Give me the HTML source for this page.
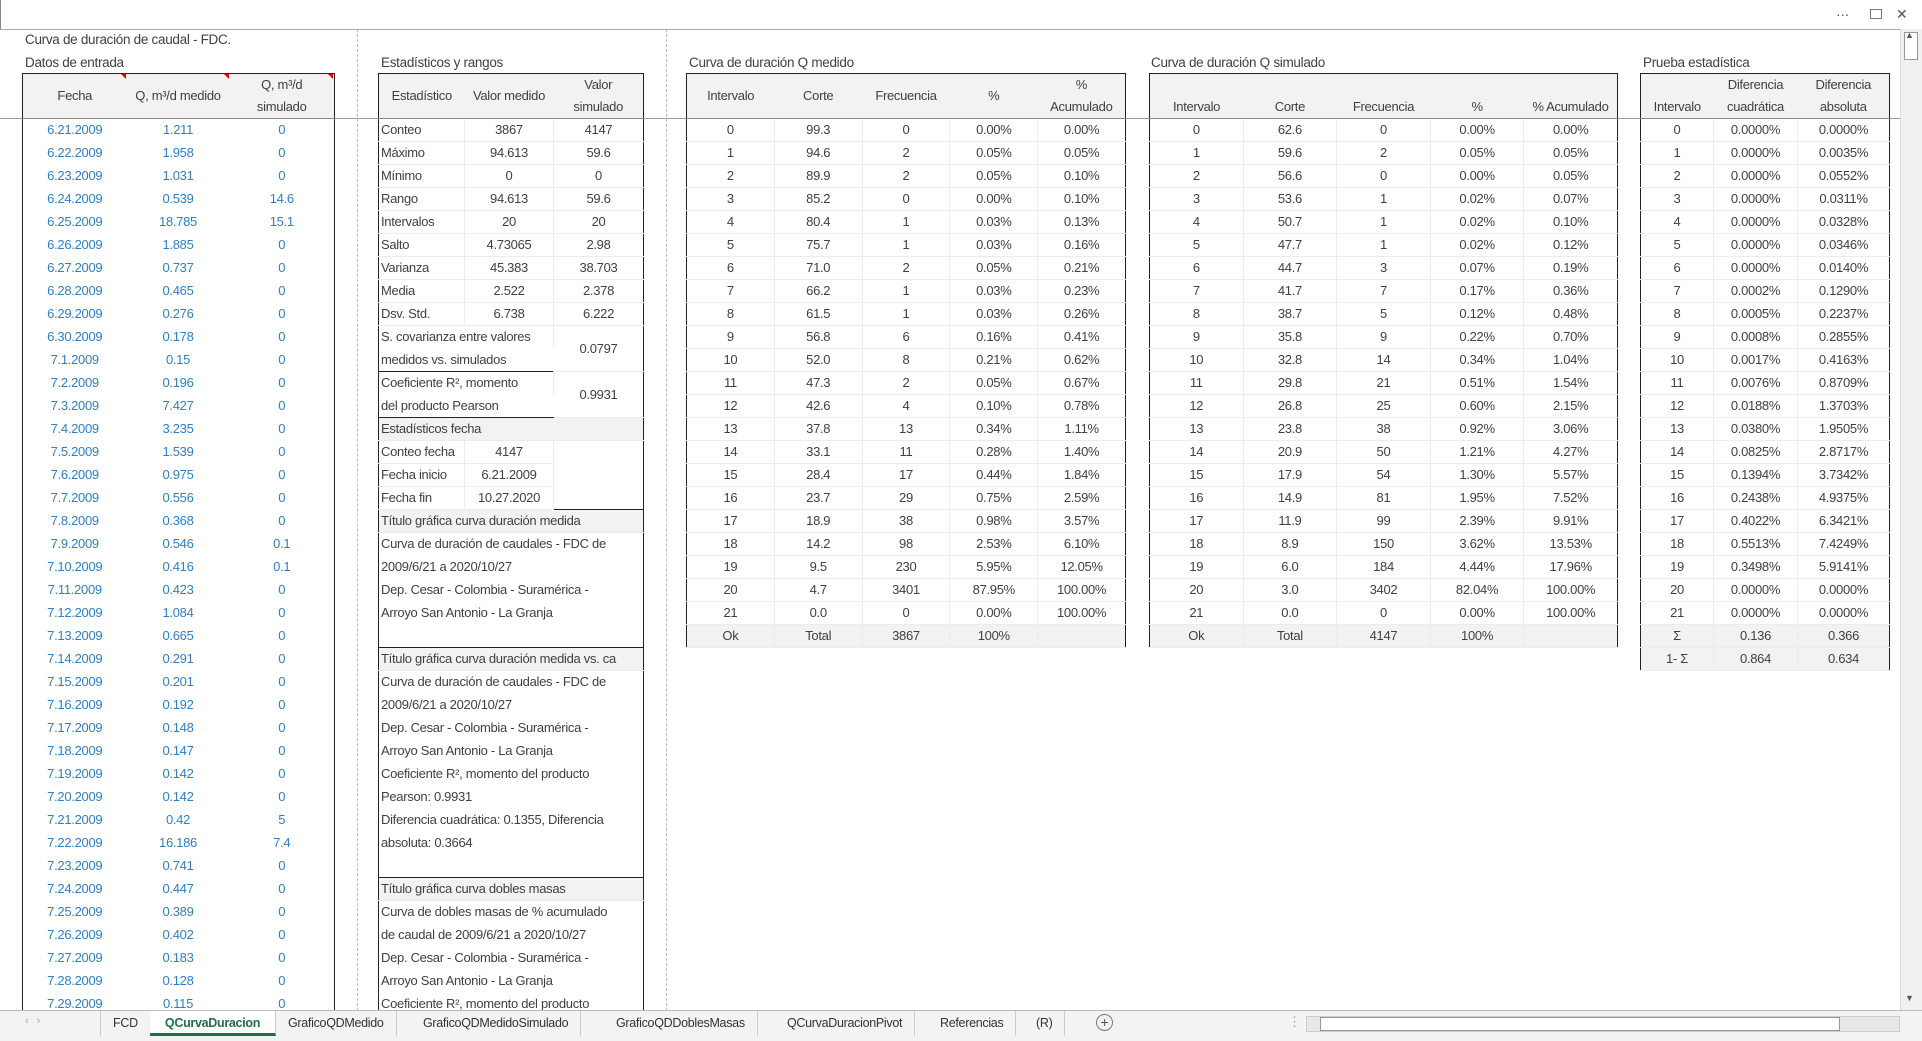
<!DOCTYPE html>
<html><head><meta charset="utf-8"><style>
*{margin:0;padding:0;box-sizing:border-box}
body{width:1922px;height:1041px;overflow:hidden;background:#fff;font-family:"Liberation Sans",sans-serif;font-size:13px;color:#404040;position:relative;letter-spacing:-0.3px}
.a{position:absolute;white-space:nowrap}
table{position:absolute;border-collapse:collapse;table-layout:fixed;border:1.5px solid #222}
td{height:23px;text-align:center;border-right:1px solid #ececec;border-bottom:1px solid #ececec;white-space:nowrap;overflow:hidden;padding:0 2px;line-height:22px}
td:last-child{border-right:none}
th{height:45px;background:#f2f2f2;font-weight:normal;border-bottom:1px solid #888;line-height:22px;vertical-align:middle}
th.b{vertical-align:bottom}
.blue td{color:#2f7fc4;border:none}
.l{text-align:left}
.g td{background:#f2f2f2}
.bt td{border-top:1.5px solid #222}
.dot{position:absolute;top:29px;height:982px;border-left:1px dashed #bbb}
.tab{position:absolute;top:1011px;height:25px;line-height:24px;font-size:12.5px;color:#333;padding:0 12px;border-right:1px solid #ccc}
</style></head><body>
<div class="a" style="left:0;top:29px;width:1900px;border-top:1px solid #aaa"></div>
<div class="a" style="left:0;top:0;height:29px;border-left:1px solid #888"></div>
<div class="a" style="left:1836px;top:6px;font-size:14px;color:#555">···</div>
<div class="a" style="left:1870px;top:9px;width:12px;height:10px;border:1px solid #777"></div>
<div class="a" style="left:1896px;top:6px;font-size:14px;color:#555">✕</div>
<div class="a" style="left:0;top:118px;width:1900px;border-top:1px solid #999"></div>
<div class="dot" style="left:357px"></div>
<div class="dot" style="left:666px"></div>
<div class="a" style="left:25px;top:32px;font-size:13.5px">Curva de duración de caudal - FDC.</div>
<div class="a" style="left:25px;top:55px;font-size:13.5px">Datos de entrada</div>
<div class="a" style="left:381px;top:55px;font-size:13.5px">Estadísticos y rangos</div>
<div class="a" style="left:689px;top:55px;font-size:13.5px">Curva de duración Q medido</div>
<div class="a" style="left:1151px;top:55px;font-size:13.5px">Curva de duración Q simulado</div>
<div class="a" style="left:1643px;top:55px;font-size:13.5px">Prueba estadística</div>

<table style="left:22px;top:73px;width:312px">
<colgroup><col style="width:104px"><col style="width:103px"><col style="width:105px"></colgroup>
<tr><th>Fecha</th><th>Q, m³/d medido</th><th>Q, m³/d<br>simulado</th></tr>
<tbody class="blue">
<tr><td>6.21.2009</td><td>1.211</td><td>0</td></tr>
<tr><td>6.22.2009</td><td>1.958</td><td>0</td></tr>
<tr><td>6.23.2009</td><td>1.031</td><td>0</td></tr>
<tr><td>6.24.2009</td><td>0.539</td><td>14.6</td></tr>
<tr><td>6.25.2009</td><td>18.785</td><td>15.1</td></tr>
<tr><td>6.26.2009</td><td>1.885</td><td>0</td></tr>
<tr><td>6.27.2009</td><td>0.737</td><td>0</td></tr>
<tr><td>6.28.2009</td><td>0.465</td><td>0</td></tr>
<tr><td>6.29.2009</td><td>0.276</td><td>0</td></tr>
<tr><td>6.30.2009</td><td>0.178</td><td>0</td></tr>
<tr><td>7.1.2009</td><td>0.15</td><td>0</td></tr>
<tr><td>7.2.2009</td><td>0.196</td><td>0</td></tr>
<tr><td>7.3.2009</td><td>7.427</td><td>0</td></tr>
<tr><td>7.4.2009</td><td>3.235</td><td>0</td></tr>
<tr><td>7.5.2009</td><td>1.539</td><td>0</td></tr>
<tr><td>7.6.2009</td><td>0.975</td><td>0</td></tr>
<tr><td>7.7.2009</td><td>0.556</td><td>0</td></tr>
<tr><td>7.8.2009</td><td>0.368</td><td>0</td></tr>
<tr><td>7.9.2009</td><td>0.546</td><td>0.1</td></tr>
<tr><td>7.10.2009</td><td>0.416</td><td>0.1</td></tr>
<tr><td>7.11.2009</td><td>0.423</td><td>0</td></tr>
<tr><td>7.12.2009</td><td>1.084</td><td>0</td></tr>
<tr><td>7.13.2009</td><td>0.665</td><td>0</td></tr>
<tr><td>7.14.2009</td><td>0.291</td><td>0</td></tr>
<tr><td>7.15.2009</td><td>0.201</td><td>0</td></tr>
<tr><td>7.16.2009</td><td>0.192</td><td>0</td></tr>
<tr><td>7.17.2009</td><td>0.148</td><td>0</td></tr>
<tr><td>7.18.2009</td><td>0.147</td><td>0</td></tr>
<tr><td>7.19.2009</td><td>0.142</td><td>0</td></tr>
<tr><td>7.20.2009</td><td>0.142</td><td>0</td></tr>
<tr><td>7.21.2009</td><td>0.42</td><td>5</td></tr>
<tr><td>7.22.2009</td><td>16.186</td><td>7.4</td></tr>
<tr><td>7.23.2009</td><td>0.741</td><td>0</td></tr>
<tr><td>7.24.2009</td><td>0.447</td><td>0</td></tr>
<tr><td>7.25.2009</td><td>0.389</td><td>0</td></tr>
<tr><td>7.26.2009</td><td>0.402</td><td>0</td></tr>
<tr><td>7.27.2009</td><td>0.183</td><td>0</td></tr>
<tr><td>7.28.2009</td><td>0.128</td><td>0</td></tr>
<tr><td>7.29.2009</td><td>0.115</td><td>0</td></tr>
</tbody></table>
<div class="a" style="left:121px;top:74px;border-top:5px solid #e00;border-left:5px solid transparent"></div>
<div class="a" style="left:224px;top:74px;border-top:5px solid #e00;border-left:5px solid transparent"></div>
<div class="a" style="left:328px;top:74px;border-top:5px solid #e00;border-left:5px solid transparent"></div>

<table style="left:378px;top:73px;width:265px">
<colgroup><col style="width:86px"><col style="width:89px"><col style="width:90px"></colgroup>
<tr><th>Estadístico</th><th>Valor medido</th><th>Valor<br>simulado</th></tr>
<tr><td class="l">Conteo</td><td>3867</td><td>4147</td></tr>
<tr><td class="l">Máximo</td><td>94.613</td><td>59.6</td></tr>
<tr><td class="l">Mínimo</td><td>0</td><td>0</td></tr>
<tr><td class="l">Rango</td><td>94.613</td><td>59.6</td></tr>
<tr><td class="l">Intervalos</td><td>20</td><td>20</td></tr>
<tr><td class="l">Salto</td><td>4.73065</td><td>2.98</td></tr>
<tr><td class="l">Varianza</td><td>45.383</td><td>38.703</td></tr>
<tr><td class="l">Media</td><td>2.522</td><td>2.378</td></tr>
<tr><td class="l">Dsv. Std.</td><td>6.738</td><td>6.222</td></tr>
<tr class="bt"><td class="l" colspan="2" style="border-right:1px solid #ececec;border-bottom:none;border-top:1.5px solid #222">S. covarianza entre valores</td><td rowspan="2" style="border-top:1.5px solid #222">0.0797</td></tr>
<tr><td class="l" colspan="2" style="border-bottom:none">medidos vs. simulados</td></tr>
<tr class="bt"><td class="l" colspan="2" style="border-right:1px solid #ececec;border-bottom:none;border-top:1.5px solid #222">Coeficiente R², momento</td><td rowspan="2" style="border-top:1.5px solid #222">0.9931</td></tr>
<tr><td class="l" colspan="2" style="border-bottom:none">del producto Pearson</td></tr>
<tr class="bt g"><td class="l" colspan="3">Estadísticos fecha</td></tr>
<tr><td class="l">Conteo fecha</td><td>4147</td><td style="border:none"></td></tr>
<tr><td class="l">Fecha inicio</td><td>6.21.2009</td><td style="border:none"></td></tr>
<tr><td class="l">Fecha fin</td><td>10.27.2020</td><td style="border:none"></td></tr>
<tr class="bt g"><td class="l" colspan="3">Título gráfica curva duración medida</td></tr>
<tr><td class="l" colspan="3" style="border:none">Curva de duración de caudales - FDC de</td></tr>
<tr><td class="l" colspan="3" style="border:none">2009/6/21 a 2020/10/27</td></tr>
<tr><td class="l" colspan="3" style="border:none">Dep. Cesar - Colombia - Suramérica -</td></tr>
<tr><td class="l" colspan="3" style="border:none">Arroyo San Antonio - La Granja</td></tr>
<tr><td colspan="3" style="border:none"></td></tr>
<tr class="bt g"><td class="l" colspan="3">Título gráfica curva duración medida vs. ca</td></tr>
<tr><td class="l" colspan="3" style="border:none">Curva de duración de caudales - FDC de</td></tr>
<tr><td class="l" colspan="3" style="border:none">2009/6/21 a 2020/10/27</td></tr>
<tr><td class="l" colspan="3" style="border:none">Dep. Cesar - Colombia - Suramérica -</td></tr>
<tr><td class="l" colspan="3" style="border:none">Arroyo San Antonio - La Granja</td></tr>
<tr><td class="l" colspan="3" style="border:none">Coeficiente R², momento del producto</td></tr>
<tr><td class="l" colspan="3" style="border:none">Pearson: 0.9931</td></tr>
<tr><td class="l" colspan="3" style="border:none">Diferencia cuadrática: 0.1355, Diferencia</td></tr>
<tr><td class="l" colspan="3" style="border:none">absoluta: 0.3664</td></tr>
<tr><td colspan="3" style="border:none"></td></tr>
<tr class="bt g"><td class="l" colspan="3">Título gráfica curva dobles masas</td></tr>
<tr><td class="l" colspan="3" style="border:none">Curva de dobles masas de % acumulado</td></tr>
<tr><td class="l" colspan="3" style="border:none">de caudal de 2009/6/21 a 2020/10/27</td></tr>
<tr><td class="l" colspan="3" style="border:none">Dep. Cesar - Colombia - Suramérica -</td></tr>
<tr><td class="l" colspan="3" style="border:none">Arroyo San Antonio - La Granja</td></tr>
<tr><td class="l" colspan="3" style="border:none">Coeficiente R², momento del producto</td></tr>
</table>

<table style="left:686px;top:73px;width:440px">
<tr><th>Intervalo</th><th>Corte</th><th>Frecuencia</th><th>%</th><th>%<br>Acumulado</th></tr>
<tr><td>0</td><td>99.3</td><td>0</td><td>0.00%</td><td>0.00%</td></tr>
<tr><td>1</td><td>94.6</td><td>2</td><td>0.05%</td><td>0.05%</td></tr>
<tr><td>2</td><td>89.9</td><td>2</td><td>0.05%</td><td>0.10%</td></tr>
<tr><td>3</td><td>85.2</td><td>0</td><td>0.00%</td><td>0.10%</td></tr>
<tr><td>4</td><td>80.4</td><td>1</td><td>0.03%</td><td>0.13%</td></tr>
<tr><td>5</td><td>75.7</td><td>1</td><td>0.03%</td><td>0.16%</td></tr>
<tr><td>6</td><td>71.0</td><td>2</td><td>0.05%</td><td>0.21%</td></tr>
<tr><td>7</td><td>66.2</td><td>1</td><td>0.03%</td><td>0.23%</td></tr>
<tr><td>8</td><td>61.5</td><td>1</td><td>0.03%</td><td>0.26%</td></tr>
<tr><td>9</td><td>56.8</td><td>6</td><td>0.16%</td><td>0.41%</td></tr>
<tr><td>10</td><td>52.0</td><td>8</td><td>0.21%</td><td>0.62%</td></tr>
<tr><td>11</td><td>47.3</td><td>2</td><td>0.05%</td><td>0.67%</td></tr>
<tr><td>12</td><td>42.6</td><td>4</td><td>0.10%</td><td>0.78%</td></tr>
<tr><td>13</td><td>37.8</td><td>13</td><td>0.34%</td><td>1.11%</td></tr>
<tr><td>14</td><td>33.1</td><td>11</td><td>0.28%</td><td>1.40%</td></tr>
<tr><td>15</td><td>28.4</td><td>17</td><td>0.44%</td><td>1.84%</td></tr>
<tr><td>16</td><td>23.7</td><td>29</td><td>0.75%</td><td>2.59%</td></tr>
<tr><td>17</td><td>18.9</td><td>38</td><td>0.98%</td><td>3.57%</td></tr>
<tr><td>18</td><td>14.2</td><td>98</td><td>2.53%</td><td>6.10%</td></tr>
<tr><td>19</td><td>9.5</td><td>230</td><td>5.95%</td><td>12.05%</td></tr>
<tr><td>20</td><td>4.7</td><td>3401</td><td>87.95%</td><td>100.00%</td></tr>
<tr><td>21</td><td>0.0</td><td>0</td><td>0.00%</td><td>100.00%</td></tr>
<tr class="g"><td>Ok</td><td>Total</td><td>3867</td><td>100%</td><td></td></tr>
</table>

<table style="left:1149px;top:73px;width:469px">
<tr><th class="b">Intervalo</th><th class="b">Corte</th><th class="b">Frecuencia</th><th class="b">%</th><th class="b">% Acumulado</th></tr>
<tr><td>0</td><td>62.6</td><td>0</td><td>0.00%</td><td>0.00%</td></tr>
<tr><td>1</td><td>59.6</td><td>2</td><td>0.05%</td><td>0.05%</td></tr>
<tr><td>2</td><td>56.6</td><td>0</td><td>0.00%</td><td>0.05%</td></tr>
<tr><td>3</td><td>53.6</td><td>1</td><td>0.02%</td><td>0.07%</td></tr>
<tr><td>4</td><td>50.7</td><td>1</td><td>0.02%</td><td>0.10%</td></tr>
<tr><td>5</td><td>47.7</td><td>1</td><td>0.02%</td><td>0.12%</td></tr>
<tr><td>6</td><td>44.7</td><td>3</td><td>0.07%</td><td>0.19%</td></tr>
<tr><td>7</td><td>41.7</td><td>7</td><td>0.17%</td><td>0.36%</td></tr>
<tr><td>8</td><td>38.7</td><td>5</td><td>0.12%</td><td>0.48%</td></tr>
<tr><td>9</td><td>35.8</td><td>9</td><td>0.22%</td><td>0.70%</td></tr>
<tr><td>10</td><td>32.8</td><td>14</td><td>0.34%</td><td>1.04%</td></tr>
<tr><td>11</td><td>29.8</td><td>21</td><td>0.51%</td><td>1.54%</td></tr>
<tr><td>12</td><td>26.8</td><td>25</td><td>0.60%</td><td>2.15%</td></tr>
<tr><td>13</td><td>23.8</td><td>38</td><td>0.92%</td><td>3.06%</td></tr>
<tr><td>14</td><td>20.9</td><td>50</td><td>1.21%</td><td>4.27%</td></tr>
<tr><td>15</td><td>17.9</td><td>54</td><td>1.30%</td><td>5.57%</td></tr>
<tr><td>16</td><td>14.9</td><td>81</td><td>1.95%</td><td>7.52%</td></tr>
<tr><td>17</td><td>11.9</td><td>99</td><td>2.39%</td><td>9.91%</td></tr>
<tr><td>18</td><td>8.9</td><td>150</td><td>3.62%</td><td>13.53%</td></tr>
<tr><td>19</td><td>6.0</td><td>184</td><td>4.44%</td><td>17.96%</td></tr>
<tr><td>20</td><td>3.0</td><td>3402</td><td>82.04%</td><td>100.00%</td></tr>
<tr><td>21</td><td>0.0</td><td>0</td><td>0.00%</td><td>100.00%</td></tr>
<tr class="g"><td>Ok</td><td>Total</td><td>4147</td><td>100%</td><td></td></tr>
</table>

<table style="left:1640px;top:73px;width:249px">
<colgroup><col style="width:73px"><col style="width:84px"><col style="width:92px"></colgroup>
<tr><th class="b">Intervalo</th><th>Diferencia<br>cuadrática</th><th>Diferencia<br>absoluta</th></tr>
<tr><td>0</td><td>0.0000%</td><td>0.0000%</td></tr>
<tr><td>1</td><td>0.0000%</td><td>0.0035%</td></tr>
<tr><td>2</td><td>0.0000%</td><td>0.0552%</td></tr>
<tr><td>3</td><td>0.0000%</td><td>0.0311%</td></tr>
<tr><td>4</td><td>0.0000%</td><td>0.0328%</td></tr>
<tr><td>5</td><td>0.0000%</td><td>0.0346%</td></tr>
<tr><td>6</td><td>0.0000%</td><td>0.0140%</td></tr>
<tr><td>7</td><td>0.0002%</td><td>0.1290%</td></tr>
<tr><td>8</td><td>0.0005%</td><td>0.2237%</td></tr>
<tr><td>9</td><td>0.0008%</td><td>0.2855%</td></tr>
<tr><td>10</td><td>0.0017%</td><td>0.4163%</td></tr>
<tr><td>11</td><td>0.0076%</td><td>0.8709%</td></tr>
<tr><td>12</td><td>0.0188%</td><td>1.3703%</td></tr>
<tr><td>13</td><td>0.0380%</td><td>1.9505%</td></tr>
<tr><td>14</td><td>0.0825%</td><td>2.8717%</td></tr>
<tr><td>15</td><td>0.1394%</td><td>3.7342%</td></tr>
<tr><td>16</td><td>0.2438%</td><td>4.9375%</td></tr>
<tr><td>17</td><td>0.4022%</td><td>6.3421%</td></tr>
<tr><td>18</td><td>0.5513%</td><td>7.4249%</td></tr>
<tr><td>19</td><td>0.3498%</td><td>5.9141%</td></tr>
<tr><td>20</td><td>0.0000%</td><td>0.0000%</td></tr>
<tr><td>21</td><td>0.0000%</td><td>0.0000%</td></tr>
<tr class="g"><td>Σ</td><td>0.136</td><td>0.366</td></tr>
<tr class="g"><td>1- Σ</td><td>0.864</td><td>0.634</td></tr>
</table>

<div class="a" style="left:1900px;top:29px;width:22px;height:982px;background:#f0f0f0;border-left:1px solid #ddd"></div>
<div class="a" style="left:1904px;top:32px;width:14px;height:28px;background:#fff;border:1px solid #999"></div>
<div class="a" style="left:1905px;top:993px;font-size:9px;color:#555">▼</div>
<div class="a" style="left:1905px;top:30px;font-size:9px;color:#555">▲</div>
<div class="a" style="left:0;top:1010px;width:1922px;height:31px;background:#f3f3f3;border-top:1px solid #bbb"></div>
<div class="a" style="left:25px;top:1015px;font-size:11px;color:#aaa">‹ &nbsp; ›</div>
<div class="tab" style="left:100px;border-left:1px solid #ccc">FCD</div>
<div class="tab" style="left:150px;width:126px;background:#fff;color:#1e7145;font-weight:bold;border-bottom:3px solid #1e7145;text-align:center">QCurvaDuracion</div>
<div class="tab" style="left:276px">GraficoQDMedido</div>
<div class="tab" style="left:411px">GraficoQDMedidoSimulado</div>
<div class="tab" style="left:604px">GraficoQDDoblesMasas</div>
<div class="tab" style="left:775px">QCurvaDuracionPivot</div>
<div class="tab" style="left:928px">Referencias</div>
<div class="tab" style="left:1024px">(R)</div>
<div class="a" style="left:1096px;top:1014px;width:17px;height:17px;border:1px solid #777;border-radius:50%;text-align:center;line-height:15px;font-size:14px;color:#555">+</div>
<div class="a" style="left:1288px;top:1014px;color:#999">⋮</div>
<div class="a" style="left:1306px;top:1016px;width:594px;height:16px;background:#e8e8e8;border:1px solid #ccc"></div>
<div class="a" style="left:1320px;top:1017px;width:520px;height:14px;background:#fff;border:1px solid #999"></div>
</body></html>
